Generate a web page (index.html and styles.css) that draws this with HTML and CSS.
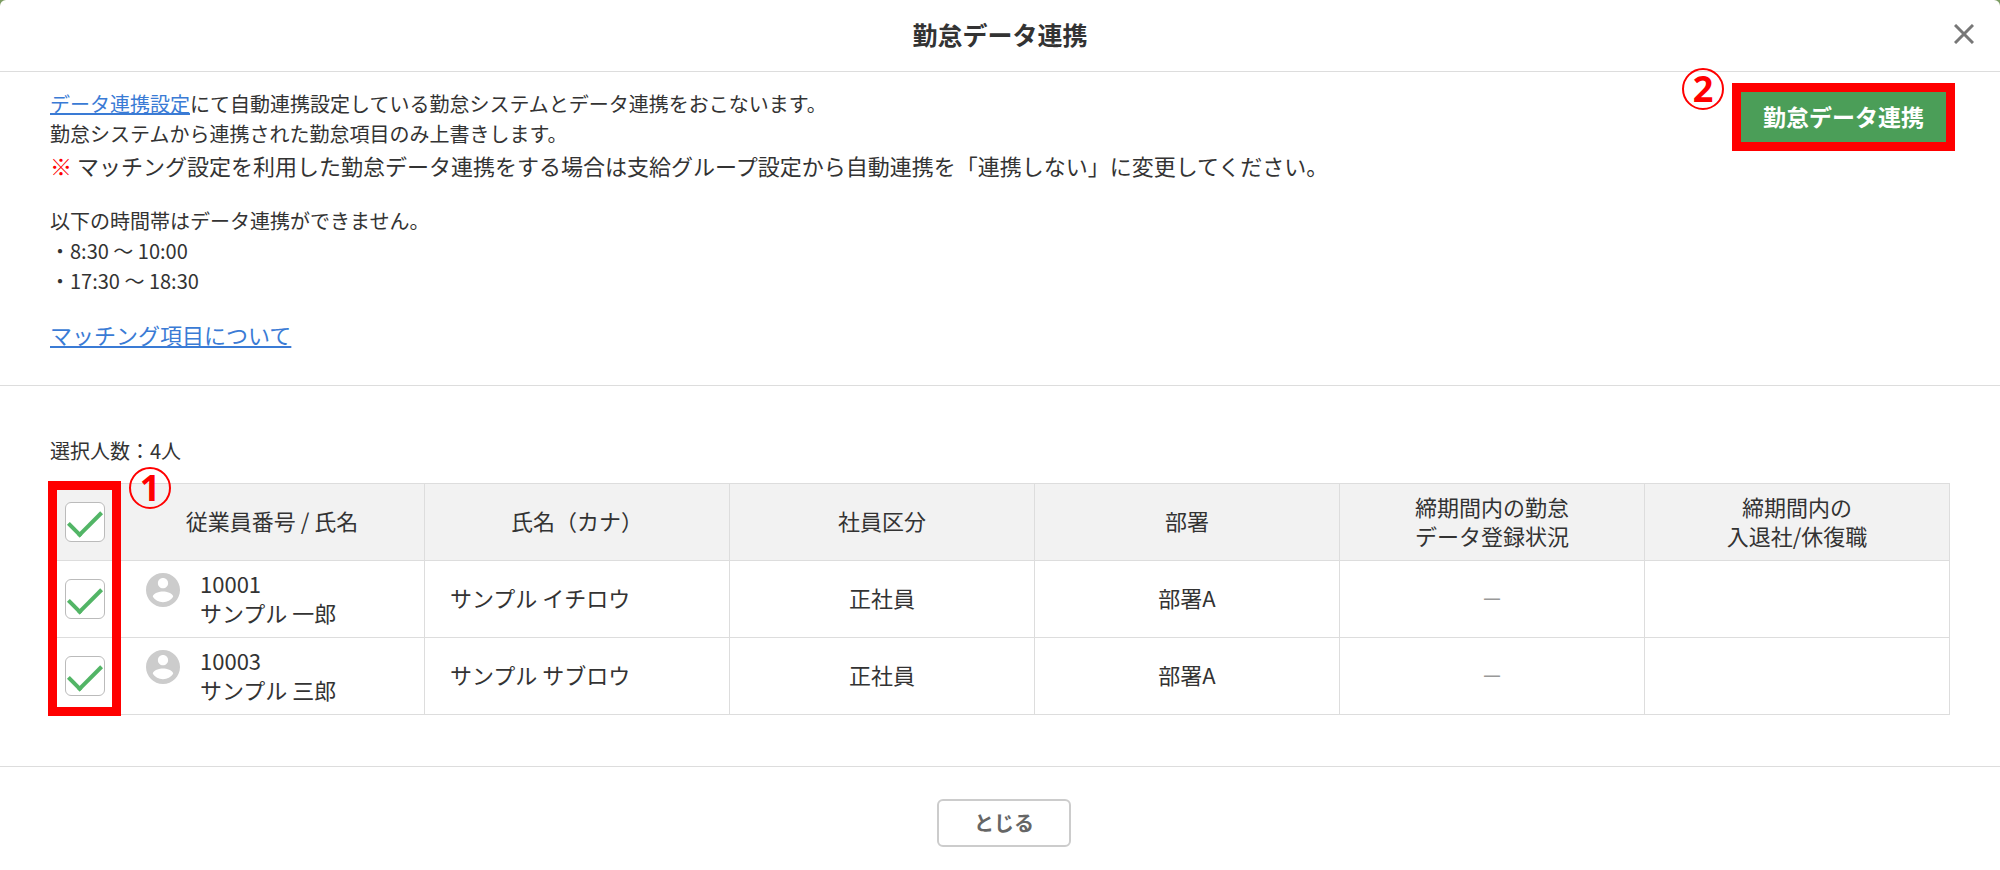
FILE: index.html
```html
<!DOCTYPE html>
<html lang="ja">
<head>
    <meta charset="UTF-8">
    <meta name="viewport" content="width=device-width, initial-scale=1.0">
    <title>勤怠データ連携</title>
    <link rel="stylesheet" href="styles.css">
</head>
<body>
    <div class="modal">
        <header class="modal-header">
            <h1 class="modal-title">勤怠データ連携</h1>
            <button class="close" aria-label="閉じる">
                <svg width="20" height="20" viewBox="0 0 20 20" fill="none" stroke="#777" stroke-width="3">
                    <path d="M1 1 19 19M19 1 1 19"/>
                </svg>
            </button>
        </header>

        <section class="intro">
            <div class="description">
                <p><a href="#">データ連携設定</a>にて自動連携設定している勤怠システムとデータ連携をおこないます。<br>勤怠システムから連携された勤怠項目のみ上書きします。</p>
                <p class="note"><span class="mark">※</span> マッチング設定を利用した勤怠データ連携をする場合は支給グループ設定から自動連携を「連携しない」に変更してください。</p>
                <p class="hours">以下の時間帯はデータ連携ができません。<br>・8:30 ～ 10:00<br>・17:30 ～ 18:30</p>
                <p class="help"><a href="#">マッチング項目について</a></p>
            </div>
            <div class="action">
                <button class="sync">勤怠データ連携</button>
                <span class="step step-sync">2</span>
            </div>
        </section>

        <section class="members">
            <p class="count">選択人数：4人</p>
            <div class="table-wrap">
                <table class="table">
                    <colgroup>
                        <col class="col-check">
                        <col span="6">
                    </colgroup>
                    <thead>
                        <tr>
                            <th class="check"><input type="checkbox" class="checkbox" aria-label="すべて選択" checked></th>
                            <th>従業員番号 / 氏名</th>
                            <th>氏名（カナ）</th>
                            <th>社員区分</th>
                            <th>部署</th>
                            <th>締期間内の勤怠<br>データ登録状況</th>
                            <th>締期間内の<br>入退社/休復職</th>
                        </tr>
                    </thead>
                    <tbody>
                        <tr>
                            <td class="check"><input type="checkbox" class="checkbox" aria-label="サンプル 一郎" checked></td>
                            <td>
                                <div class="person">
                                    <svg class="avatar" viewBox="2 2 20 20" fill="#ccc">
                                        <path d="M12 2C6.48 2 2 6.48 2 12s4.480 10 10 10 10-4.480 10-10S17.520 2 12 2zm0 3c1.660 0 3 1.340 3 3s-1.340 3-3 3-3-1.340-3-3 1.340-3 3-3zm0 14.200c-2.500 0-4.710-1.280-6-3.220.03-1.990 4-3.080 6-3.080 1.990 0 5.970 1.090 6 3.080-1.290 1.940-3.500 3.220-6 3.220z"/>
                                    </svg>
                                    <div>10001<br>サンプル 一郎</div>
                                </div>
                            </td>
                            <td class="kana">サンプル イチロウ</td>
                            <td>正社員</td>
                            <td>部署A</td>
                            <td class="none">－</td>
                            <td></td>
                        </tr>
                        <tr>
                            <td class="check"><input type="checkbox" class="checkbox" aria-label="サンプル 三郎" checked></td>
                            <td>
                                <div class="person">
                                    <svg class="avatar" viewBox="2 2 20 20" fill="#ccc">
                                        <path d="M12 2C6.48 2 2 6.48 2 12s4.480 10 10 10 10-4.480 10-10S17.520 2 12 2zm0 3c1.660 0 3 1.340 3 3s-1.340 3-3 3-3-1.340-3-3 1.340-3 3-3zm0 14.200c-2.500 0-4.710-1.280-6-3.220.03-1.990 4-3.080 6-3.080 1.990 0 5.970 1.090 6 3.080-1.290 1.940-3.500 3.220-6 3.220z"/>
                                    </svg>
                                    <div>10003<br>サンプル 三郎</div>
                                </div>
                            </td>
                            <td class="kana">サンプル サブロウ</td>
                            <td>正社員</td>
                            <td>部署A</td>
                            <td class="none">－</td>
                            <td></td>
                        </tr>
                    </tbody>
                </table>
                <div class="frame"></div>
                <span class="step step-check">1</span>
            </div>
        </section>

        <footer class="modal-footer">
            <button class="dismiss">とじる</button>
        </footer>
    </div>
</body>
</html>
```
FILE: styles.css
```css
* {
    box-sizing: border-box;
}
body {
    margin: 0;
    background-color: #7c9c62;
    color: #333;
    font-family: "Noto Sans CJK JP", sans-serif;
    font-size: 20px;
    line-height: 30px;
}
p {
    margin: 0;
}
a {
    color: #3a7bd5;
}
button {
    font-family: inherit;
    cursor: pointer;
}
.modal {
    min-height: 100vh;
    background-color: #fff;
    border-radius: 6px 6px 0 0;
}
.modal-header {
    display: grid;
    grid-template-columns: 1fr auto 1fr;
    align-items: center;
    height: 72px;
    padding: 0 26px 3px;
    border-bottom: 1px solid #ddd;
}
.modal-title {
    grid-column: 2;
    margin: 0;
    font-size: 25px;
    font-weight: 700;
}
.close {
    justify-self: end;
    display: flex;
    padding: 0;
    border: none;
    background: none;
}
.intro {
    display: flex;
    justify-content: space-between;
    align-items: flex-start;
    padding: 17px 50px 36px;
    border-bottom: 1px solid #ddd;
}
.note {
    font-size: 22px;
    line-height: 32px;
}
.mark {
    color: #f00;
}
.hours {
    margin-top: 25px;
}
.help {
    margin-top: 23px;
    font-size: 22px;
}
.action {
    position: relative;
    margin: -6px -5px 0 0;
}
.sync {
    display: block;
    padding: 9px 22px 11px;
    border: 9px solid #f00;
    background-color: #4b9e58;
    color: #fff;
    font-size: 23px;
    font-weight: 700;
    line-height: 30px;
}
/* numbered markers */
.step {
    position: absolute;
    width: 42px;
    height: 42px;
    border: 2px solid #f00;
    border-radius: 50%;
    color: #f00;
    font-family: "Noto Sans", sans-serif;
    font-size: 36px;
    font-weight: 700;
    line-height: 38px;
    text-align: center;
}
.step-sync {
    top: -15px;
    left: -50px;
}
.step-check {
    top: -16px;
    left: 79px;
}
.members {
    padding: 50px 50px 51px;
}
.count {
    margin-bottom: 17px;
}
.table-wrap {
    position: relative;
}
.table {
    width: 100%;
    table-layout: fixed;
    border-collapse: collapse;
    font-size: 22px;
    line-height: 29px;
    text-align: center;
}
.col-check {
    width: 69px;
}
.table th,
.table td {
    height: 77px;
    padding: 0 0 3px;
    border: 1px solid #ddd;
}
.table th {
    background-color: #f2f2f2;
    font-weight: 400;
}
.table .check {
    padding: 0;
}
.table .kana {
    padding-left: 25px;
    text-align: left;
}
.table .none {
    color: #999;
}
.person {
    display: flex;
    gap: 20px;
    padding-left: 26px;
    text-align: left;
}
.avatar {
    width: 34px;
    height: 34px;
    margin-top: 4px;
}
.checkbox {
    display: inline-grid;
    place-items: center;
    width: 40px;
    height: 40px;
    margin: 0;
    border: 1px solid #bbb;
    border-radius: 6px;
    background-color: #fff;
    appearance: none;
    vertical-align: middle;
}
.checkbox:checked::after {
    content: "";
    width: 14px;
    height: 29px;
    margin-bottom: 8px;
    border: solid #52b566;
    border-width: 0 4px 4px 0;
    transform: rotate(45deg);
}
.frame {
    position: absolute;
    top: -2px;
    bottom: -1px;
    left: -2px;
    width: 73px;
    border: 9px solid #f00;
    pointer-events: none;
}
.modal-footer {
    display: flex;
    justify-content: center;
    padding: 32px 24px 24px 32px;
    border-top: 1px solid #ddd;
}
.dismiss {
    padding: 7px 35px;
    border: 2px solid #ccc;
    border-radius: 6px;
    background-color: #fff;
    color: #666;
    font-size: 20px;
    font-weight: 700;
    line-height: 30px;
}
```
